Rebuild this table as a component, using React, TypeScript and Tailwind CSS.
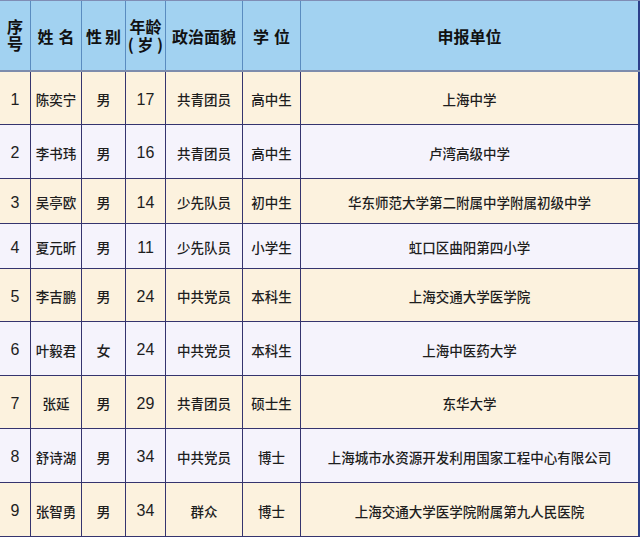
import React from "react";

type Row = {
  no: string;
  name: string;
  sex: string;
  age: string;
  party: string;
  degree: string;
  unit: string;
  h: string;
  bg: string;
};

const CREAM = "bg-[#fcf2de]";
const LAV = "bg-[#f5f3fc]";

const rows: Row[] = [
  { no: "1", name: "陈奕宁", sex: "男", age: "17", party: "共青团员", degree: "高中生", unit: "上海中学", h: "h-[53px]", bg: CREAM },
  { no: "2", name: "李书玮", sex: "男", age: "16", party: "共青团员", degree: "高中生", unit: "卢湾高级中学", h: "h-[54px]", bg: LAV },
  { no: "3", name: "吴亭欧", sex: "男", age: "14", party: "少先队员", degree: "初中生", unit: "华东师范大学第二附属中学附属初级中学", h: "h-[45px]", bg: CREAM },
  { no: "4", name: "夏元昕", sex: "男", age: "11", party: "少先队员", degree: "小学生", unit: "虹口区曲阳第四小学", h: "h-[45px]", bg: LAV },
  { no: "5", name: "李吉鹏", sex: "男", age: "24", party: "中共党员", degree: "本科生", unit: "上海交通大学医学院", h: "h-[53px]", bg: CREAM },
  { no: "6", name: "叶毅君", sex: "女", age: "24", party: "中共党员", degree: "本科生", unit: "上海中医药大学", h: "h-[54px]", bg: LAV },
  { no: "7", name: "张延", sex: "男", age: "29", party: "共青团员", degree: "硕士生", unit: "东华大学", h: "h-[53px]", bg: CREAM },
  { no: "8", name: "舒诗湖", sex: "男", age: "34", party: "中共党员", degree: "博士", unit: "上海城市水资源开发利用国家工程中心有限公司", h: "h-[54px]", bg: LAV },
  { no: "9", name: "张智勇", sex: "男", age: "34", party: "群众", degree: "博士", unit: "上海交通大学医学院附属第九人民医院", h: "h-[54px]", bg: CREAM },
];

const cjk = "font-['Noto_Sans_CJK_SC',sans-serif]";
const num = "font-['Liberation_Sans','Noto_Sans_CJK_SC',sans-serif]";

const hcell =
  "flex flex-col items-center justify-center border-r border-[#5a8cc0] text-[16px] font-bold text-[#111] leading-[16px]";
const bcell = "flex items-center justify-center border-r border-b border-[#35346e] pt-[3px]";

export default function App() {
  return (
    <div className={`w-[640px] h-[537px] overflow-hidden bg-white ${cjk}`}>
      <div className="grid grid-cols-[31px_51px_44px_40px_77px_58px_1fr]">
        {/* header */}
        <div className="col-span-7 grid grid-cols-[31px_51px_44px_40px_77px_58px_1fr] h-[72px] bg-[#a2d2f1] border-t border-[#7f8db5] border-b-2 border-b-[#7d8cac]">
          <div className={hcell}>
            <span className="[writing-mode:vertical-rl] tracking-[1px]">序号</span>
          </div>
          <div className={`${hcell} tracking-[5px] pl-[5px]`}>姓名</div>
          <div className={`${hcell} tracking-[3px] pl-[3px]`}>性别</div>
          <div className={hcell}>
            <span className="block w-[38px] text-center leading-[18px] mt-[-2px]">年龄 ( 岁 )</span>
          </div>
          <div className={hcell}>政治面貌</div>
          <div className={`${hcell} tracking-[5px] pl-[5px]`}>学位</div>
          <div className={`${hcell} border-r-2 border-r-[#2c3f8a] text-[15.5px]`}>申报单位</div>
        </div>

        {rows.map((r) => (
          <div
            key={r.no}
            className={`col-span-7 grid grid-cols-[31px_51px_44px_40px_77px_58px_1fr] ${r.h} ${r.bg} text-[#1e1e1e]`}
          >
            <div className={`${bcell} ${num} text-[16px]`}>{r.no}</div>
            <div className={`${bcell} text-[13.5px] font-medium`}>{r.name}</div>
            <div className={`${bcell} text-[14px] font-medium`}>{r.sex}</div>
            <div className={`${bcell} ${num} text-[16px]`}>{r.age}</div>
            <div className={`${bcell} text-[13.5px] font-medium`}>{r.party}</div>
            <div className={`${bcell} text-[13.5px] font-medium`}>{r.degree}</div>
            <div className={`${bcell} border-r-2 border-r-[#2c3f8a] text-[13.5px] font-medium`}>{r.unit}</div>
          </div>
        ))}
      </div>
    </div>
  );
}
